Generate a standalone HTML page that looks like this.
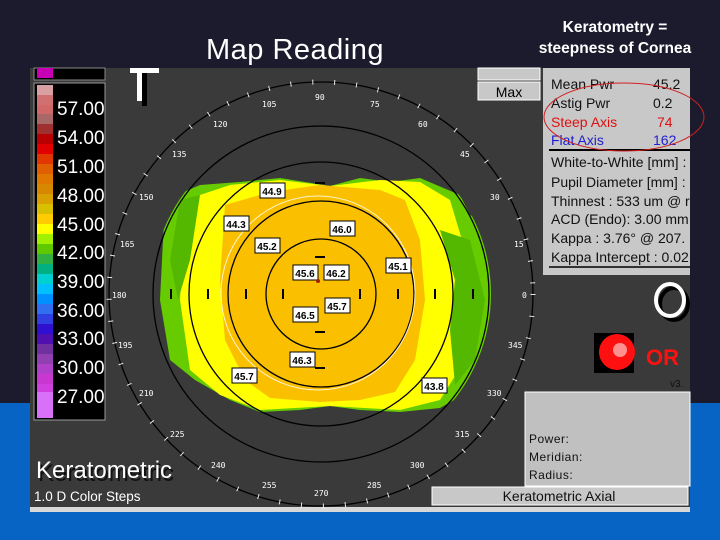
<!DOCTYPE html>
<html><head><meta charset="utf-8"><style>
body{margin:0;width:720px;height:540px;overflow:hidden;background:#1b1b2d;position:relative;font-family:"Liberation Sans",sans-serif}
#blue{position:absolute;left:0;top:403px;width:720px;height:137px;background:#0763c4}
#title{position:absolute;left:206px;top:34px;color:#fff;font-size:29px;letter-spacing:0.5px}
#kt{position:absolute;left:520px;top:17px;width:190px;text-align:center;color:#fff;font-weight:bold;font-size:15.5px;line-height:21px}
svg{position:absolute;left:0;top:0}
</style></head><body>
<div id="blue"></div>
<div id="title">Map Reading</div>
<div id="kt">Keratometry =<br>steepness of Cornea</div>
<svg width="720" height="540" font-family="Liberation Sans, sans-serif">
<rect x="30" y="68" width="660" height="442" fill="#3a3a3a"/>
<rect x="30" y="507" width="660" height="5" fill="#d8d8d8"/>
<rect x="34" y="68" width="71" height="12" fill="#000" stroke="#888"/>
<rect x="37" y="68" width="16" height="10" fill="#c800b4"/>
<rect x="34" y="83" width="71" height="337" fill="#000" stroke="#999"/>
<g>
<rect x="37" y="85" width="16" height="10" fill="#d8a0a0"/>
<rect x="37" y="95" width="16" height="10" fill="#d07070"/>
<rect x="37" y="105" width="16" height="9" fill="#d06868"/>
<rect x="37" y="114" width="16" height="10" fill="#a86868"/>
<rect x="37" y="124" width="16" height="10" fill="#a03030"/>
<rect x="37" y="134" width="16" height="10" fill="#b80000"/>
<rect x="37" y="144" width="16" height="10" fill="#e00000"/>
<rect x="37" y="154" width="16" height="10" fill="#e03800"/>
<rect x="37" y="164" width="16" height="10" fill="#e06000"/>
<rect x="37" y="174" width="16" height="10" fill="#e07800"/>
<rect x="37" y="184" width="16" height="10" fill="#d88800"/>
<rect x="37" y="194" width="16" height="10" fill="#d8a000"/>
<rect x="37" y="204" width="16" height="10" fill="#d8c000"/>
<rect x="37" y="214" width="16" height="10" fill="#ffcc00"/>
<rect x="37" y="224" width="16" height="10" fill="#ffff00"/>
<rect x="37" y="234" width="16" height="10" fill="#a0f000"/>
<rect x="37" y="244" width="16" height="10" fill="#60c800"/>
<rect x="37" y="254" width="16" height="10" fill="#30b040"/>
<rect x="37" y="264" width="16" height="10" fill="#00b080"/>
<rect x="37" y="274" width="16" height="10" fill="#00d0d0"/>
<rect x="37" y="284" width="16" height="10" fill="#00c0ff"/>
<rect x="37" y="294" width="16" height="10" fill="#0090ff"/>
<rect x="37" y="304" width="16" height="10" fill="#3070f0"/>
<rect x="37" y="314" width="16" height="10" fill="#3040e0"/>
<rect x="37" y="324" width="16" height="10" fill="#3010d0"/>
<rect x="37" y="334" width="16" height="10" fill="#5010b0"/>
<rect x="37" y="344" width="16" height="10" fill="#7030a0"/>
<rect x="37" y="354" width="16" height="10" fill="#9040b0"/>
<rect x="37" y="364" width="16" height="10" fill="#b040c8"/>
<rect x="37" y="374" width="16" height="10" fill="#c838d0"/>
<rect x="37" y="384" width="16" height="8" fill="#d040e0"/>
<rect x="37" y="392" width="16" height="26" fill="#d870f8"/>
</g>
<g fill="#fff" font-size="19">
<text x="57" y="115">57.00</text><text x="57" y="144">54.00</text><text x="57" y="173">51.00</text>
<text x="57" y="202">48.00</text><text x="57" y="231">45.00</text><text x="57" y="259">42.00</text>
<text x="57" y="288">39.00</text><text x="57" y="317">36.00</text><text x="57" y="345">33.00</text>
<text x="57" y="374">30.00</text><text x="57" y="403">27.00</text>
</g>
<rect x="142" y="70" width="5" height="36" fill="#000"/>
<rect x="130" y="68" width="29" height="5" fill="#fff"/><rect x="137" y="68" width="5" height="33" fill="#fff"/>
<defs><clipPath id="c"><circle cx="321" cy="294" r="170"/></clipPath></defs>
<g clip-path="url(#c)">
<path d="M165 200 L200 185 L240 182 L280 178 L330 186 L360 178 L390 182 L420 178 L460 195 L470 215 L490 225 L492 300 L490 360 L480 385 L440 408 L400 412 L360 410 L330 406 L300 410 L260 412 L230 400 L195 380 L170 360 L160 300 Z" fill="#66cc00"/>
<path d="M185 200 L230 185 L280 180 L330 186 L380 180 L420 182 L450 200 L462 240 L470 300 L465 360 L440 400 L400 410 L330 406 L260 410 L220 395 L190 370 L180 300 Z" fill="#ffff00"/>
<path d="M225 205 L270 192 L320 185 L380 190 L405 200 L420 240 L425 300 L415 360 L395 392 L360 400 L320 402 L270 398 L245 380 L225 340 L220 280 Z" fill="#fac000"/>
<path d="M440 230 L470 240 L485 300 L475 360 L455 385 L450 330 L455 280 Z" fill="#55b800"/>
<path d="M180 200 L200 195 L190 260 L178 300 L170 260 Z" fill="#55b800"/>
</g>
<g fill="none" stroke="#000" stroke-width="1.3">
<circle cx="321" cy="294" r="55"/><circle cx="321" cy="294" r="93"/>
<circle cx="321" cy="294" r="132"/><circle cx="321" cy="294" r="168"/><circle cx="321" cy="294" r="212"/>
</g>
<circle cx="321" cy="294" r="212" fill="none" stroke="#fff" stroke-width="5" stroke-dasharray="1 21" opacity="0.9"/>
<circle cx="318" cy="293" r="97" fill="none" stroke="#fff" stroke-width="1" opacity="0.8"/>
<g stroke="#000" stroke-width="2">
<line x1="171" y1="289" x2="171" y2="299"/><line x1="208" y1="289" x2="208" y2="299"/><line x1="246" y1="289" x2="246" y2="299"/>
<line x1="283" y1="289" x2="283" y2="299"/><line x1="360" y1="289" x2="360" y2="299"/><line x1="398" y1="289" x2="398" y2="299"/>
<line x1="435" y1="289" x2="435" y2="299"/><line x1="473" y1="289" x2="473" y2="299"/>
<line x1="315" y1="183" x2="325" y2="183"/><line x1="315" y1="257" x2="325" y2="257"/><line x1="315" y1="332" x2="325" y2="332"/><line x1="315" y1="368" x2="325" y2="368"/>
</g>
<g fill="#fff" font-size="8" font-family="DejaVu Sans Mono, monospace">
<text x="315" y="100">90</text><text x="262" y="107">105</text><text x="370" y="107">75</text>
<text x="213" y="127">120</text><text x="418" y="127">60</text><text x="172" y="157">135</text><text x="460" y="157">45</text>
<text x="139" y="200">150</text><text x="490" y="200">30</text><text x="120" y="247">165</text><text x="514" y="247">15</text>
<text x="112" y="298">180</text><text x="522" y="298">0</text><text x="118" y="348">195</text><text x="508" y="348">345</text>
<text x="139" y="396">210</text><text x="487" y="396">330</text><text x="170" y="437">225</text><text x="455" y="437">315</text>
<text x="211" y="468">240</text><text x="410" y="468">300</text><text x="262" y="488">255</text><text x="367" y="488">285</text>
<text x="314" y="496">270</text>
</g>
<g font-size="10" font-weight="bold" text-anchor="middle">
<g fill="#fff" stroke="#000" stroke-width="1">
<rect x="260" y="183" width="25" height="15"/><rect x="224" y="216" width="25" height="15"/><rect x="330" y="221" width="25" height="15"/>
<rect x="255" y="238" width="25" height="15"/><rect x="386" y="258" width="25" height="15"/><rect x="293" y="265" width="25" height="15"/>
<rect x="324" y="265" width="25" height="15"/><rect x="325" y="298" width="25" height="15"/><rect x="293" y="307" width="25" height="15"/>
<rect x="290" y="352" width="25" height="15"/><rect x="232" y="368" width="25" height="15"/><rect x="422" y="378" width="25" height="15"/>
</g>
<g fill="#000">
<text x="272" y="195">44.9</text><text x="236" y="228">44.3</text><text x="342" y="233">46.0</text>
<text x="267" y="250">45.2</text><text x="398" y="270">45.1</text><text x="305" y="277">45.6</text>
<text x="336" y="277">46.2</text><text x="337" y="310">45.7</text><text x="305" y="319">46.5</text>
<text x="302" y="364">46.3</text><text x="244" y="380">45.7</text><text x="434" y="390">43.8</text>
</g></g>
<circle cx="318" cy="281" r="2" fill="#a02000"/>
<rect x="478" y="68" width="62" height="12" fill="#c8c8c8" stroke="#fff"/>
<rect x="478" y="82" width="62" height="18" fill="#c8c8c8" stroke="#fff"/>
<text x="509" y="97" font-size="14" text-anchor="middle" fill="#000">Max</text>
<rect x="543" y="68" width="147" height="207" fill="#c8c8c8"/>
<g font-size="14" fill="#111">
<text x="551" y="89">Mean Pwr</text><text x="653" y="89">45.2</text>
<text x="551" y="108">Astig Pwr</text><text x="653" y="108">0.2</text>
<text x="551" y="127" fill="#e01010">Steep Axis</text><text x="657" y="127" fill="#e01010">74</text>
<text x="551" y="145" fill="#2020d0">Flat Axis</text><text x="653" y="145" fill="#2020d0">162</text>
<text x="551" y="167">White-to-White [mm] :</text>
<text x="551" y="187">Pupil Diameter [mm] :</text>
<text x="551" y="206">Thinnest : 533 um @ r</text>
<text x="551" y="224">ACD (Endo): 3.00 mm</text>
<text x="551" y="243">Kappa : 3.76° @ 207.</text>
<text x="551" y="262">Kappa Intercept : 0.02</text>
</g>
<line x1="549" y1="150" x2="690" y2="150" stroke="#000" stroke-width="2"/>
<line x1="549" y1="267" x2="690" y2="267" stroke="#000" stroke-width="1.5"/>
<ellipse cx="624" cy="117" rx="80" ry="34" fill="none" stroke="#d02020" stroke-width="1"/>
<ellipse cx="672" cy="302" rx="14" ry="16" fill="none" stroke="#000" stroke-width="4" transform="translate(2,2)"/>
<ellipse cx="670" cy="300" rx="14" ry="16" fill="none" stroke="#fff" stroke-width="4"/>
<rect x="594" y="333" width="40" height="40" fill="#000"/>
<circle cx="617" cy="352" r="18" fill="#ff1010"/><circle cx="620" cy="350" r="7" fill="#ff9090"/>
<text x="646" y="365" font-size="22" font-weight="bold" fill="#ff1010">OR</text>
<text x="670" y="387" font-size="10" fill="#111">v3.</text>
<rect x="525" y="392" width="165" height="94" fill="#c0c0c0" stroke="#fff"/>
<g font-size="12" fill="#111" letter-spacing="0.5"><text x="529" y="443">Power:</text><text x="529" y="461">Meridian:</text><text x="529" y="479">Radius:</text></g>
<rect x="432" y="487" width="256" height="18" fill="#c8c8c8" stroke="#fff"/>
<text x="559" y="501" font-size="14" text-anchor="middle" fill="#111">Keratometric Axial</text>
<text x="38" y="481" font-size="24" fill="#111">Keratometric</text>
<text x="36" y="478" font-size="24" fill="#fff">Keratometric</text>
<text x="34" y="501" font-size="13.5" fill="#fff">1.0 D Color Steps</text>
</svg>
</body></html>
